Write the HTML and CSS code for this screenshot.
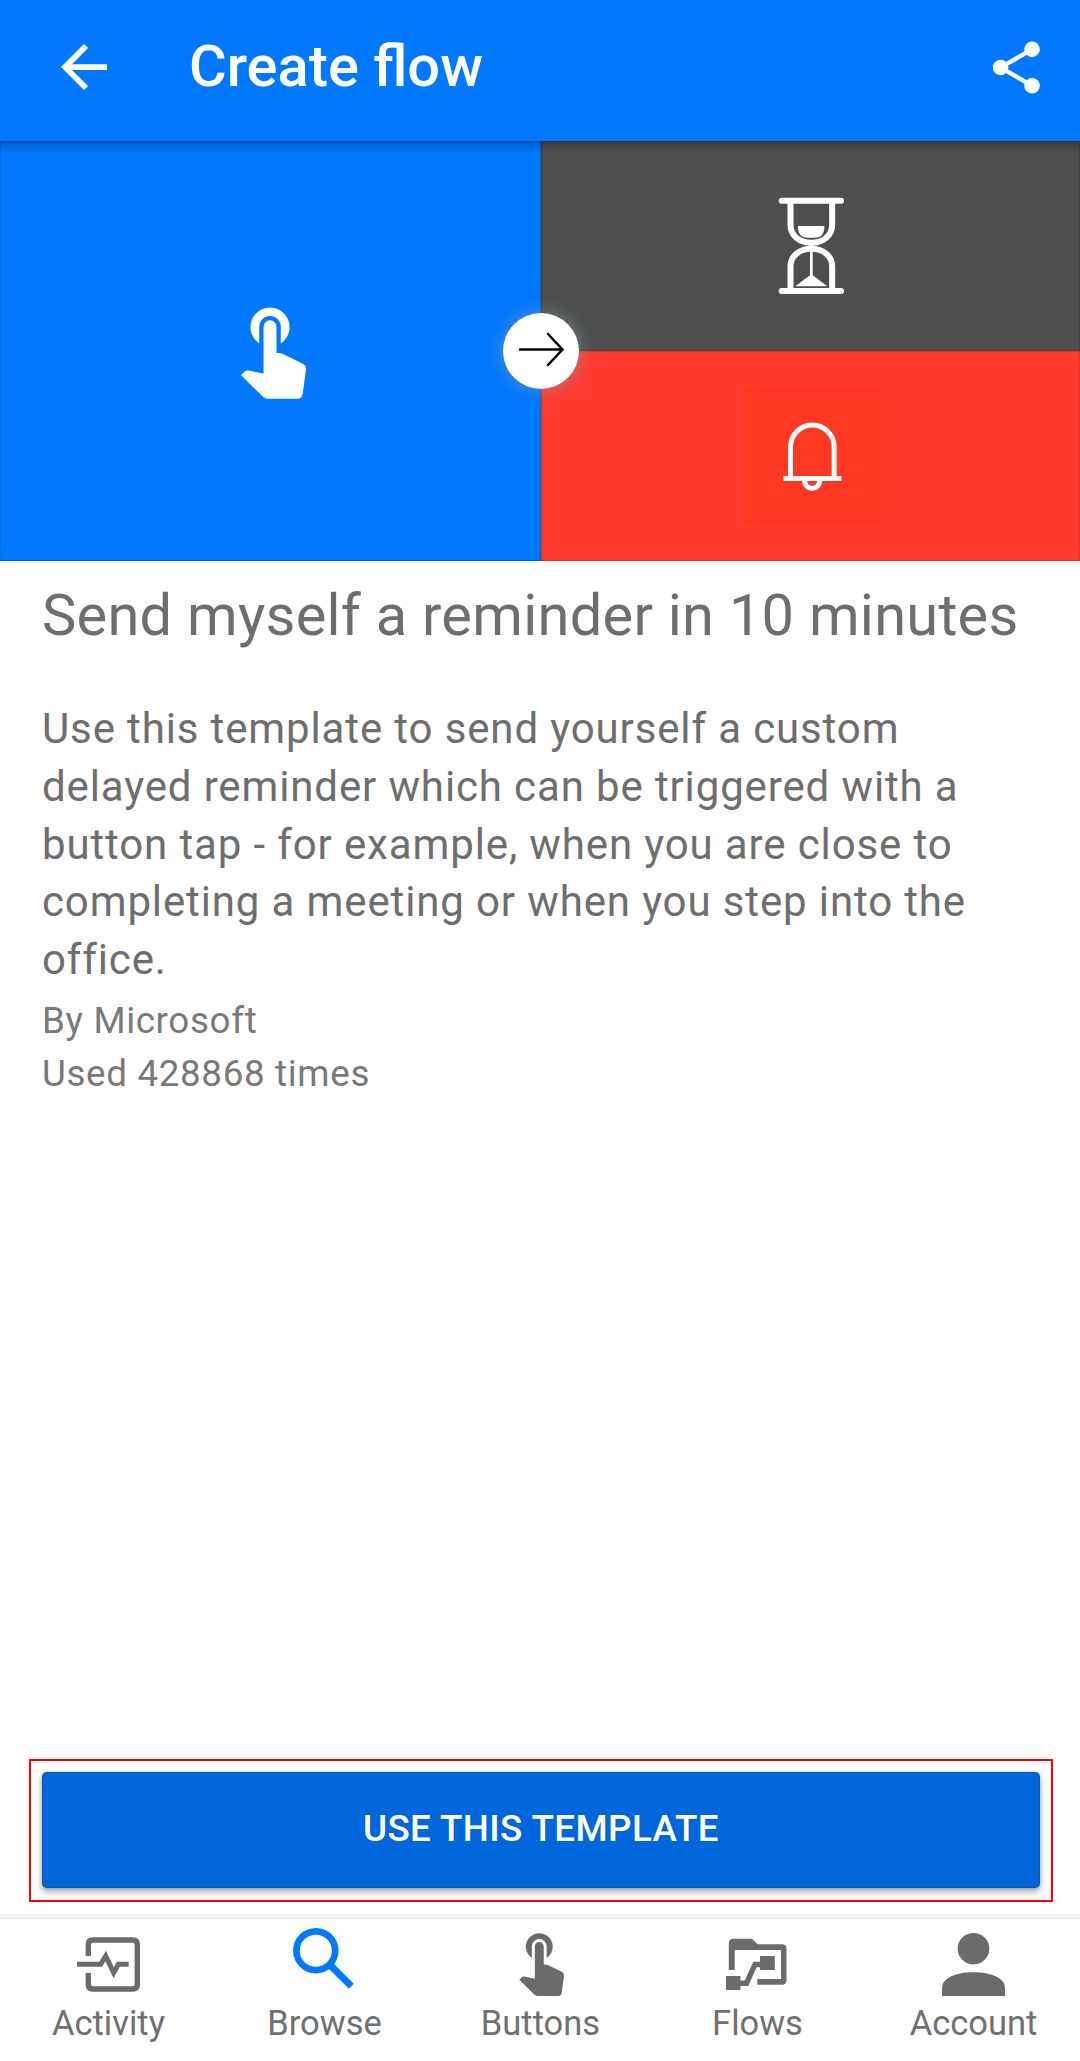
FILE: index.html
```html
<!DOCTYPE html>
<html lang="en">
<head>
<meta charset="utf-8">
<title>Create flow</title>
<link rel="stylesheet" href="styles.css">
</head>
<body>
<header class="app-bar">
  <svg class="back" viewBox="4 4 16 16"><path d="M20 11H7.83l5.59-5.59L12 4l-8 8 8 8 1.41-1.41L7.83 13H20z"/></svg>
  <h1 class="app-title">Create flow</h1>
  <svg class="share" viewBox="159 124 142 158"><path d="M277 148L182 203L277 258" fill="none" stroke="#fff" stroke-width="13"/><circle cx="277" cy="148" r="23.5"/><circle cx="277" cy="258" r="23.5"/><circle cx="182" cy="203" r="23.5"/></svg>
</header>
<section class="hero">
  <div class="tile tile-trigger">
    <svg class="tap" viewBox="61 51 196 276"><path d="M116 160A59 59 0 1 1 181 160V110A32.500 32.500 0 0 0 116 110Z"/><path d="M129 251V110A19.500 19.500 0 0 1 168 110V189H176Q181 189 186 191L249 222Q258 228 257 239L247 312Q245 327 232 327H141Q134 327 128 322L61 256L72 245Q77 240 84 242Z"/></svg>
  </div>
  <div class="tile tile-delay">
    <svg class="glyph" viewBox="36 18 417 420"><g fill="none" stroke="#fff" stroke-width="18"><path d="M155 92H333M155 363H333" stroke-linecap="round"/><path d="M181.500 92V165C181.500 196 208 218.500 244 218.500S306.500 196 306.500 165V92M181.500 363V290C181.500 258 208 236.500 244 236.500S306.500 258 306.500 290V363"/></g><path d="M204 168H283V176Q280 203 254 203H233Q207 203 204 176ZM240 244H248V316L292 349H196L240 316Z"/></svg>
  </div>
  <div class="tile tile-notify">
    <svg class="glyph glyph-bell" viewBox="36 648 417 420"><g fill="none" stroke="#fff" stroke-width="15"><path d="M181.500 925V832A65.500 67 0 0 1 312.500 832V925M160 925.500H334"/><path d="M224 930V933A22.500 22.500 0 0 0 269 933V930"/></g></svg>
  </div>
  <div class="link-badge"><svg viewBox="0 0 76 76"><path d="M17 36.500H59M45 21L59.500 36.500L45 52" fill="none" stroke="#000" stroke-width="2.500" stroke-linecap="round"/></svg></div>
</section>
<main class="details">
  <h2 class="name">Send myself a reminder in 10 minutes</h2>
  <p class="description">Use this template to send yourself a custom delayed reminder which can be triggered with a button tap - for example, when you are close to completing a meeting or when you step into the office.</p>
  <p class="meta">By Microsoft</p>
  <p class="meta">Used 428868 times</p>
</main>
<div class="action"><button class="use-button">USE THIS TEMPLATE</button></div>
<nav class="tabs">
  <a class="tab"><svg viewBox="68 1925 80 72"><g fill="none" stroke="#6b6b6b" stroke-width="5.400"><path d="M88.300 1956V1944.500Q88.300 1940 92.800 1940H132.800Q137.300 1940 137.300 1944.500V1984.500Q137.300 1989 132.800 1989H92.800Q88.300 1989 88.300 1984.500V1973"/><path d="M77 1964.300H100.700L105.700 1956L113.700 1972.800L118.300 1964.300H128.700" stroke-width="5"/></g></svg><span>Activity</span></a>
  <a class="tab"><svg viewBox="284 1925 80 72"><g fill="none" stroke="#0078ff"><circle cx="315.800" cy="1950.700" r="19.400" stroke-width="6.700"/><path d="M331 1966L351.300 1986.300" stroke-width="7"/></g></svg><span>Browse</span></a>
  <a class="tab"><svg viewBox="500 1925 80 72"><g transform="translate(519.300 1933) scale(.2283) translate(-61 -51)"><path d="M116 160A59 59 0 1 1 181 160V110A32.500 32.500 0 0 0 116 110Z"/><path d="M129 251V110A19.500 19.500 0 0 1 168 110V189H176Q181 189 186 191L249 222Q258 228 257 239L247 312Q245 327 232 327H141Q134 327 128 322L61 256L72 245Q77 240 84 242Z"/></g></svg><span>Buttons</span></a>
  <a class="tab tab-late"><svg viewBox="716 1925 80 72"><path d="M728.800 1970V1943.500Q728.800 1938.700 733.500 1938.700H751.800L757.600 1944.300H782Q786.500 1944.300 786.500 1949V1980Q786.500 1984.700 782 1984.700H757.300V1979H781V1950H734.700V1970ZM760 1956H774.800V1970H760ZM726 1976H740.400V1990H726Z"/><path d="M740 1983.300H746.500L755 1964.500H761" fill="none" stroke="#6b6b6b" stroke-width="5.400"/></svg><span>Flows</span></a>
  <a class="tab tab-late"><svg viewBox="932 1925 80 72"><circle cx="973.500" cy="1948.700" r="15.800"/><path d="M942 1996V1988C942 1978 956 1972.300 973.500 1972.300S1005 1978 1005 1988V1996Z"/></svg><span>Account</span></a>
</nav>
</body>
</html>
```
FILE: styles.css
```css
* { box-sizing: border-box; }
body {
  margin: 0;
  width: 1080px;
  height: 2061px;
  display: flex;
  flex-direction: column;
  background: #fefefe;
  color: #6e6e6e;
  font-family: Roboto, sans-serif;
  overflow: hidden;
}
h1, h2, p { margin: 0; font-weight: 400; }
svg { display: block; fill: #fff; }

.app-bar {
  height: 141px;
  flex: none;
  display: flex;
  align-items: center;
  padding: 0 40px 7px 61px;
  background: #0078ff;
}
.back { width: 46px; height: 46px; }
.app-title {
  flex: 1;
  margin: 0 0 2px 82px;
  color: #fff;
  font-size: 57.75px;
  font-weight: 500;
  line-height: 68px;
}
.share { width: 47px; height: 53px; }

.hero {
  position: relative;
  height: 420px;
  flex: none;
  display: grid;
  grid-template-columns: 541px 1fr;
  grid-template-rows: 1fr 1fr;
}
.hero::after {
  content: "";
  position: absolute;
  inset: 0 0 auto;
  height: 13px;
  background: linear-gradient(rgba(0, 0, 0, .22), rgba(0, 0, 0, 0));
}
.tile {
  display: flex;
  align-items: center;
  justify-content: center;
  box-shadow: inset 0 0 2px rgba(0, 0, 0, .55);
}
.tile-trigger { grid-row: 1 / 3; background: #0078ff; }
.tile-delay { background: #4d4f4e; }
.tile-notify { background: #ff3b30; }
.tap { width: 65px; height: 92px; margin: 4px 0 0 5px; }
.glyph { width: 139px; height: 140px; margin-left: 2px; }
.glyph-bell { background: #ff3823; }
.link-badge {
  position: absolute;
  left: 503px;
  top: 172px;
  width: 76px;
  height: 76px;
  border-radius: 50%;
  background: #fff;
  box-shadow: 0 0 18px rgba(140, 155, 165, .65);
}

.details { flex: 1; padding: 16px 42px 0; }
.name { font-size: 57.75px; line-height: 76px; letter-spacing: .27px; white-space: nowrap; }
.description { margin-top: 47px; font-size: 42px; line-height: 57.75px; letter-spacing: .87px; }
.meta { font-size: 36.75px; line-height: 52.8px; letter-spacing: .66px; color: #797979; }
.description + .meta { margin-top: 6px; }

.action {
  flex: none;
  height: 143px;
  margin: 0 27px 12px 29px;
  padding: 11px;
  border: 2px solid #f00;
}
.use-button {
  display: block;
  width: 998px;
  height: 116px;
  padding: 0 0 2px;
  border: 0;
  border-radius: 5px;
  background: #0066db;
  box-shadow: 0 4px 6px rgba(0, 0, 0, .32), 0 0 5px rgba(0, 0, 0, .14), inset 0 0 2px rgba(0, 0, 0, .45);
  color: #fff;
  font: 500 36.75px/114px Roboto, sans-serif;
  letter-spacing: .42px;
}

.tabs {
  flex: none;
  height: 147px;
  display: grid;
  grid-template-columns: repeat(5, 1fr);
  border-top: 4px solid #f4f4f4;
  box-shadow: inset 0 1px #e2e2e2;
}
.tab {
  display: flex;
  flex-direction: column;
  align-items: center;
  padding-top: 7px;
  font-size: 34.5px;
  line-height: 40px;
  color: #707070;
}
.tab svg { width: 80px; height: 72px; margin-bottom: 6px; fill: #6b6b6b; }
.tab span { margin-left: 1px; }
.tab-late span { margin-left: 3px; }
```
